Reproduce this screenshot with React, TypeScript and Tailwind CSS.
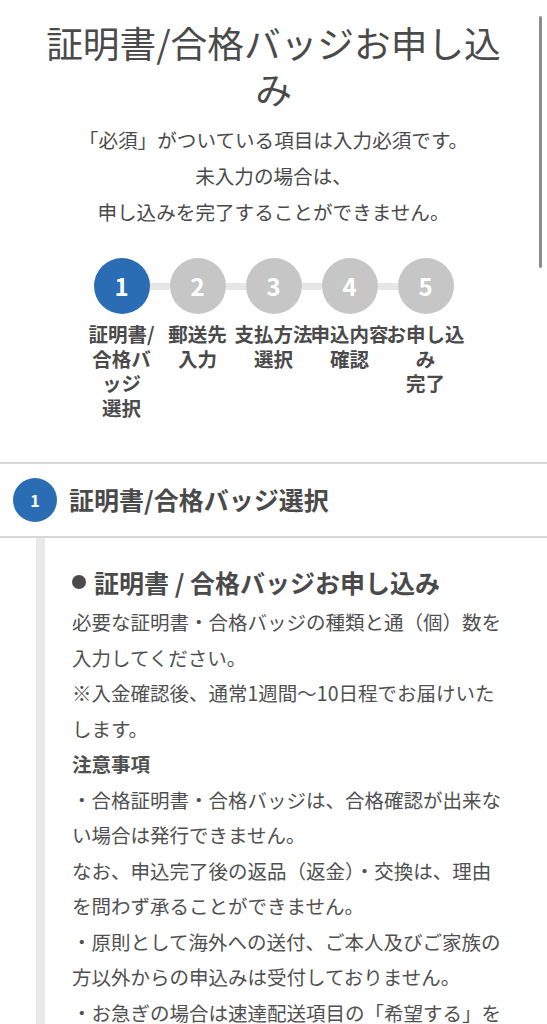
import React from 'react';

const steps = [
  { no: 1, label: ['証明書/', '合格バ', 'ッジ', '選択'], active: true },
  { no: 2, label: ['郵送先', '入力'], active: false },
  { no: 3, label: ['支払方法', '選択'], active: false },
  { no: 4, label: ['申込内容', '確認'], active: false },
  { no: 5, label: ['お申し込', 'み', '完了'], active: false },
];

const body: { text: string; bold?: boolean }[] = [
  { text: '必要な証明書・合格バッジの種類と通（個）数を入力してください。' },
  { text: '※入金確認後、通常1週間〜10日程でお届けいたします。' },
  { text: '注意事項', bold: true },
  { text: '・合格証明書・合格バッジは、合格確認が出来ない場合は発行できません。' },
  { text: 'なお、申込完了後の返品（返金）・交換は、理由を問わず承ることができません。' },
  { text: '・原則として海外への送付、ご本人及びご家族の方以外からの申込みは受付しておりません。' },
  { text: '・お急ぎの場合は速達配送項目の「希望する」を選択してください。' },
];

export default function App() {
  return (
    <div
      className="relative h-[1024px] w-[547px] overflow-hidden bg-white text-[#4a4a4a]"
      style={{ fontFamily: '"Noto Sans CJK JP", "Noto Sans", sans-serif' }}
    >
      {/* scroll indicator */}
      <div className="absolute top-[16px] right-[5px] h-[252px] w-[3px] rounded-full bg-[#8c8c8c]" />

      {/* Page title */}
      <div className="px-[40px] pt-[19px] text-center">
        <h1 className="text-[36.7px] leading-[46px] font-normal">証明書/合格バッジお申し込み</h1>
        <div className="mt-[11px] text-[19.6px] leading-[36px]">
          <p>「必須」がついている項目は入力必須です。</p>
          <p>未入力の場合は、</p>
          <p>申し込みを完了することができません。</p>
        </div>
      </div>

      {/* Steps */}
      <div className="mt-[28px] flex justify-center">
        {steps.map((s, i) => (
          <div key={s.no} className="relative flex w-[76px] flex-col items-center">
            {i > 0 && (
              <div className="absolute top-[25px] left-0 h-[7px] w-[10px] bg-[#e6e6e6]" />
            )}
            {i < steps.length - 1 && (
              <div className="absolute top-[25px] right-0 h-[7px] w-[10px] bg-[#e6e6e6]" />
            )}
            <div
              className={`flex h-[56px] w-[56px] items-center justify-center rounded-full text-[24px] font-bold text-white ${
                s.active ? 'bg-[#2a6db4]' : 'bg-[#c6c6c6]'
              }`}
            >
              {s.no}
            </div>
            <div className="mt-[8px] text-center text-[19.5px] leading-[24.5px] font-bold whitespace-nowrap">
              {s.label.map((l) => (
                <div key={l}>{l}</div>
              ))}
            </div>
          </div>
        ))}
      </div>

      {/* Section header */}
      <div className="mt-[42px] flex h-[76px] items-center gap-[12px] border-y-2 border-[#d6d6d6] pl-[13px]">
        <div className="flex h-[44px] w-[44px] items-center justify-center rounded-full bg-[#2a6db4] text-[16px] font-bold text-white">
          1
        </div>
        <h2 className="text-[25px] font-bold text-[#4a4a4a]">証明書/合格バッジ選択</h2>
      </div>

      {/* Section body */}
      <div className="ml-[36px] border-l-[9px] border-[#e9e9e9] pt-[26px] pl-[27px]">
        <div className="w-[436px]">
          <h3 className="flex items-center text-[25px] leading-[36px] font-bold">
            <span className="mr-[8px] inline-block h-[14px] w-[14px] rounded-full bg-[#4a4a4a]" />
            証明書 / 合格バッジお申し込み
          </h3>
          <div className="mt-[4px] text-[19.5px] leading-[35.5px] text-[#505050]">
            {body.map((b) => (
              <p key={b.text} className={b.bold ? 'font-bold' : ''}>
                {b.text}
              </p>
            ))}
          </div>
        </div>
      </div>
    </div>
  );
}
